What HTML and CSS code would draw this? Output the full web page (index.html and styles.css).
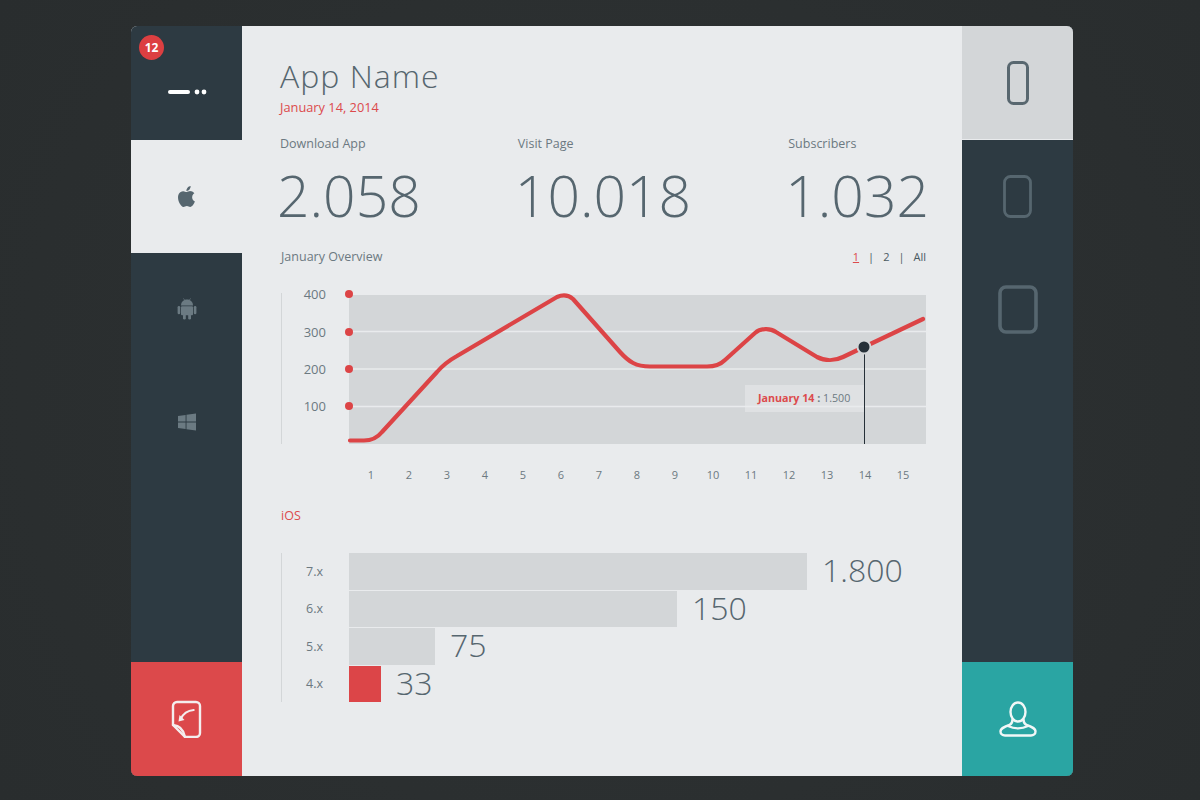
FILE: index.html
```html
<!DOCTYPE html>
<html lang="en">
<head>
<meta charset="utf-8">
<title>App Name</title>
<link rel="stylesheet" href="styles.css">
</head>
<body>
<div class="card">
  <nav class="side side-left">
    <div class="tile tile-menu">
      <span class="badge">12</span>
      <svg class="icon-menu" width="40" height="8" viewBox="0 0 40 8"><rect x="0" y="2" width="22" height="4" rx="2" fill="#fff"/><circle cx="29" cy="4" r="2.4" fill="#fff"/><circle cx="36" cy="4" r="2.4" fill="#fff"/></svg>
    </div>
    <div class="tile tile-active">
      <svg width="25" height="25" viewBox="0 0 24 24" fill="#56666f"><path d="M18.71 19.5c-.83 1.24-1.71 2.45-3.05 2.47-1.34.03-1.77-.79-3.29-.79-1.53 0-2 .77-3.27.82-1.31.05-2.3-1.32-3.14-2.53C4.25 17 2.94 12.45 4.7 9.39c.87-1.52 2.43-2.48 4.12-2.51 1.28-.02 2.5.87 3.29.87.78 0 2.26-1.07 3.81-.91.65.03 2.47.26 3.64 1.98-.09.06-2.17 1.28-2.15 3.81.03 3.02 2.65 4.03 2.68 4.04-.03.07-.42 1.44-1.38 2.83M13 3.5c.73-.83 1.94-1.46 2.94-1.5.13 1.17-.34 2.35-1.04 3.19-.69.85-1.83 1.51-2.95 1.42-.15-1.15.41-2.35 1.05-3.11z"/></svg>
    </div>
    <div class="tile">
      <svg width="20" height="22" viewBox="0 0 20 22" fill="#6b7a82"><path d="M4 7.500C4 4.200 6.600 1.600 10 1.600s6 2.600 6 5.900z"/><rect x="4" y="8.300" width="12" height="9" rx="1"/><rect x="0.600" y="8" width="2.600" height="8.200" rx="1.300"/><rect x="16.800" y="8" width="2.600" height="8.200" rx="1.300"/><rect x="6" y="16" width="2.800" height="5.600" rx="1.400"/><rect x="11.200" y="16" width="2.800" height="5.600" rx="1.400"/><path d="M6.400 0.400l1.800 2.400M13.600 0.400l-1.800 2.400" stroke="#6b7a82" stroke-width=".7"/></svg>
    </div>
    <div class="tile">
      <svg width="18" height="18" viewBox="0 0 18 18" fill="#6b7a82"><path d="M0 3l7.600-1.100v6.600H0zM8.500 1.800L18 .4v8.100H8.500zM0 9.400h7.600V16L0 15zM8.500 9.400H18v8.200l-9.500-1.400z"/></svg>
    </div>
    <div class="spacer"></div>
    <div class="tile tile-red">
      <svg width="32" height="38" viewBox="0 0 32 38" fill="none" stroke="#f4eeee" stroke-width="2.400" stroke-linecap="round" stroke-linejoin="round"><path d="M6 2h19a4 4 0 0 1 4 4v27a4 4 0 0 1-4 4H14L2 25V6a4 4 0 0 1 4-4z"/><path d="M2 25c6 .5 10.500 4.500 12 12"/><path d="M22.700 10c-6 .5-10.500 3.500-13 9" stroke-width="2"/><path d="M7.500 21.500l1-6.500 5 5z" fill="#f4eeee" stroke="none"/></svg>
    </div>
  </nav>

  <main class="main">
    <h1 class="title">App Name</h1>
    <p class="date">January 14, 2014</p>

    <section class="stats">
      <div class="stat"><div class="stat-label">Download App</div><div class="stat-value">2.058</div></div>
      <div class="stat"><div class="stat-label">Visit Page</div><div class="stat-value">10.018</div></div>
      <div class="stat"><div class="stat-label">Subscribers</div><div class="stat-value">1.032</div></div>
    </section>

    <header class="section-head">
      <h2 class="section-title">January Overview</h2>
      <div class="pager"><a class="pager-on">1</a><span>|</span><a>2</a><span>|</span><a>All</a></div>
    </header>

    <section class="chart">
      <div class="yaxis">
        <div class="yrow"><span>400</span><i class="dot"></i></div>
        <div class="yrow"><span>300</span><i class="dot"></i></div>
        <div class="yrow"><span>200</span><i class="dot"></i></div>
        <div class="yrow"><span>100</span><i class="dot"></i></div>
      </div>
      <div class="plot">
        <svg class="plot-svg" width="577" height="149" viewBox="0 0 577 149">
          <g stroke="#e9ebed" stroke-width="1.500">
            <line x1="0" y1="36.500" x2="577" y2="36.500"/>
            <line x1="0" y1="74" x2="577" y2="74"/>
            <line x1="0" y1="111.500" x2="577" y2="111.500"/>
          </g>
          <path d="M1 145.500H15C24 145.500 29 142 33 137L88 77C94 70 99 66 108 61L208 2C214 -0.500 220 0.500 224 4L271 57C280 67 287 71.500 301 71.500H358C366 71.500 371 70 376 65L406 38C412 33 421 33 427 37L468 62C476 66 486 66 494 62L515 52L574 24" fill="none" stroke="#dc4446" stroke-width="4.200" stroke-linecap="round" stroke-linejoin="round"/>
          <line x1="515.500" y1="56" x2="515.500" y2="149" stroke="#263038" stroke-width="1"/>
          <circle cx="515" cy="52" r="6.500" fill="#263038" stroke="#d3d6d8" stroke-width="2"/>
        </svg>
        <div class="tooltip"><b class="tooltip-date">January 14</b> <b>:</b> 1.500</div>
      </div>
    </section>

    <div class="xaxis">
      <span>1</span><span>2</span><span>3</span><span>4</span><span>5</span><span>6</span><span>7</span><span>8</span><span>9</span><span>10</span><span>11</span><span>12</span><span>13</span><span>14</span><span>15</span>
    </div>

    <h2 class="ios-title">iOS</h2>

    <section class="bars">
      <div class="bar-row"><span class="bar-label">7.x</span><div class="bar" style="width:458px"></div><span class="bar-value">1.800</span></div>
      <div class="bar-row"><span class="bar-label">6.x</span><div class="bar" style="width:328px"></div><span class="bar-value">150</span></div>
      <div class="bar-row"><span class="bar-label">5.x</span><div class="bar" style="width:86px"></div><span class="bar-value">75</span></div>
      <div class="bar-row"><span class="bar-label">4.x</span><div class="bar bar-red" style="width:32px"></div><span class="bar-value">33</span></div>
    </section>
  </main>

  <nav class="side side-right">
    <div class="tile tile-light">
      <svg width="22" height="44" viewBox="0 0 22 44" fill="none" stroke="#58676f" stroke-width="3"><rect x="1.500" y="1.500" width="19" height="41" rx="5"/></svg>
    </div>
    <div class="tile">
      <svg width="29" height="43" viewBox="0 0 29 43" fill="none" stroke="#56666f" stroke-width="2.800"><rect x="1.500" y="1.500" width="26" height="40" rx="6"/></svg>
    </div>
    <div class="tile">
      <svg width="40" height="49" viewBox="0 0 40 49" fill="none" stroke="#56666f" stroke-width="3.600"><rect x="2" y="2" width="36" height="45" rx="6"/></svg>
    </div>
    <div class="spacer"></div>
    <div class="tile tile-teal">
      <svg width="38" height="36" viewBox="0 0 38 36" fill="none" stroke="#f1f7f7" stroke-width="2.400" stroke-linecap="round" stroke-linejoin="round"><ellipse cx="19" cy="11" rx="7.500" ry="9.500"/><path d="M13.500 18.500c0 3-1 4.500-3 5.500C6 25.500 1.500 27 1.500 30.500c0 2.500 2 4 4.500 4h26c2.500 0 4.500-1.500 4.500-4 0-3.500-4.500-5-9-6.500-2-1-3-2.500-3-5.500"/><path d="M9 25c6 3 14 3 20 0"/></svg>
    </div>
  </nav>
</div>
</body>
</html>
```

FILE: styles.css
```css
* { box-sizing: border-box; }

html, body { margin: 0; height: 100%; }

body {
  background: radial-gradient(circle at 50% 50%, #2e3233 0%, #2b2f30 60%, #292d2e 100%);
  padding: 26px 0 0 131px;
  font-family: "Open Sans", "Liberation Sans", sans-serif;
  color: #56666f;
  overflow: hidden;
}

.card {
  display: flex;
  width: 942px;
  height: 750px;
  border-radius: 6px;
  overflow: hidden;
  background: #e9ebed;
}

/* Side rails */
.side {
  flex: 0 0 111px;
  display: flex;
  flex-direction: column;
  background: #2d3a42;
  position: relative;
}

.tile {
  flex: 0 0 113px;
  display: flex;
  align-items: center;
  justify-content: center;
}

.spacer { flex: 1; }

.tile-menu { padding-top: 18px; position: relative; flex-basis: 113.500px; }
.icon-menu { margin-left: 3px; }
.tile-active { background: #e9ebed; }
.tile-red { background: #dc494b; flex-basis: 114px; }
.tile-teal { background: #2aa5a3; flex-basis: 114px; }
.tile-light { background: #d3d6d8; border-bottom: 1px solid #e9ebed; flex-basis: 114px; }

.badge {
  position: absolute;
  left: 8px;
  top: 9px;
  width: 25px;
  height: 25px;
  border-radius: 50%;
  background: #dc3f41;
  color: #fff;
  font-size: 12px;
  font-weight: 700;
  line-height: 25px;
  text-align: center;
}

/* Main column */
.main {
  flex: 1;
  padding: 30px 36px 0 38px;
  min-width: 0;
}

.title {
  margin: 0;
  font-size: 32px;
  font-weight: 300;
  line-height: 40px;
  letter-spacing: 1px;
}

.date {
  margin: 1px 0 0;
  font-size: 12.800px;
  line-height: 20px;
  color: #dc4a4c;
}

.stats {
  display: flex;
  justify-content: space-between;
  margin: 17px -3px 0 0;
}

.stat-label {
  font-size: 12.500px;
  line-height: 20px;
  color: #6c7981;
}

.stat-value {
  margin-top: 6px;
  margin-bottom: 2px;
  margin-left: -3px;
  font-size: 57px;
  font-weight: 300;
  line-height: 70px;
}

.section-head {
  display: flex;
  justify-content: space-between;
  align-items: center;
  margin-top: 15px;
  padding-left: 1px;
  height: 20px;
}

.section-title {
  margin: 0;
  font-size: 12.500px;
  font-weight: 400;
  line-height: 20px;
  color: #6c7981;
}

.pager {
  display: flex;
  gap: 9px;
  font-size: 11px;
  line-height: 16px;
  color: #4a5961;
}

.pager-on { color: #dc4a4c; text-decoration: underline; }

/* Chart */
.chart {
  display: flex;
  margin-top: 28px;
  margin-left: 1px;
}

.yaxis {
  flex: 0 0 68px;
  height: 151px;
  margin-top: -2px;
  border-left: 1px solid #d3d6d8;
  position: relative;
  z-index: 1;
  display: grid;
  grid-auto-rows: 37.400px;
  align-content: start;
}

.yrow {
  display: flex;
  justify-content: flex-end;
  align-items: center;
  gap: 19px;
  margin-right: -4px;
  margin-top: -17.500px;
  margin-bottom: 17.500px;
  font-size: 13px;
  color: #6c7981;
}

.dot {
  width: 8px;
  height: 8px;
  border-radius: 50%;
  background: #dc4446;
}

.plot {
  position: relative;
  width: 577px;
  height: 149px;
  background: #d3d6d8;
}

.plot-svg { display: block; overflow: visible; }

.tooltip {
  position: absolute;
  left: 396px;
  top: 90px;
  width: 119px;
  height: 27px;
  background: rgba(233, 235, 237, 0.55);
  font-size: 10.700px;
  line-height: 27px;
  padding-left: 13px;
  color: #6c7981;
  white-space: nowrap;
}

.tooltip b { color: #6c7981; }
.tooltip .tooltip-date { color: #dc4a4c; }

.xaxis {
  display: grid;
  grid-template-columns: repeat(15, 38px);
  margin: 21px 0 0 72px;
  font-size: 11px;
  line-height: 20px;
  text-align: center;
  color: #6c7981;
}

.ios-title {
  margin: 21px 0 0 1px;
  font-size: 12.500px;
  font-weight: 400;
  line-height: 19px;
  color: #dc4a4c;
}

/* Bars */
.bars {
  display: grid;
  grid-auto-rows: 36.500px;
  gap: 1px;
  margin: 28px 0 0 1px;
  border-left: 1px solid #d3d6d8;
}

.bar-row { display: flex; align-items: center; height: 36.500px; }

.bar-label {
  flex: 0 0 67px;
  padding-left: 24px;
  font-size: 12.500px;
  color: #6c7981;
}

.bar { height: 100%; background: #d3d6d8; }
.bar-red { background: #dc4548; }

.bar-value {
  margin-left: 15px;
  margin-top: -2px;
  font-size: 32px;
  font-weight: 300;
  line-height: 36px;
}
```
